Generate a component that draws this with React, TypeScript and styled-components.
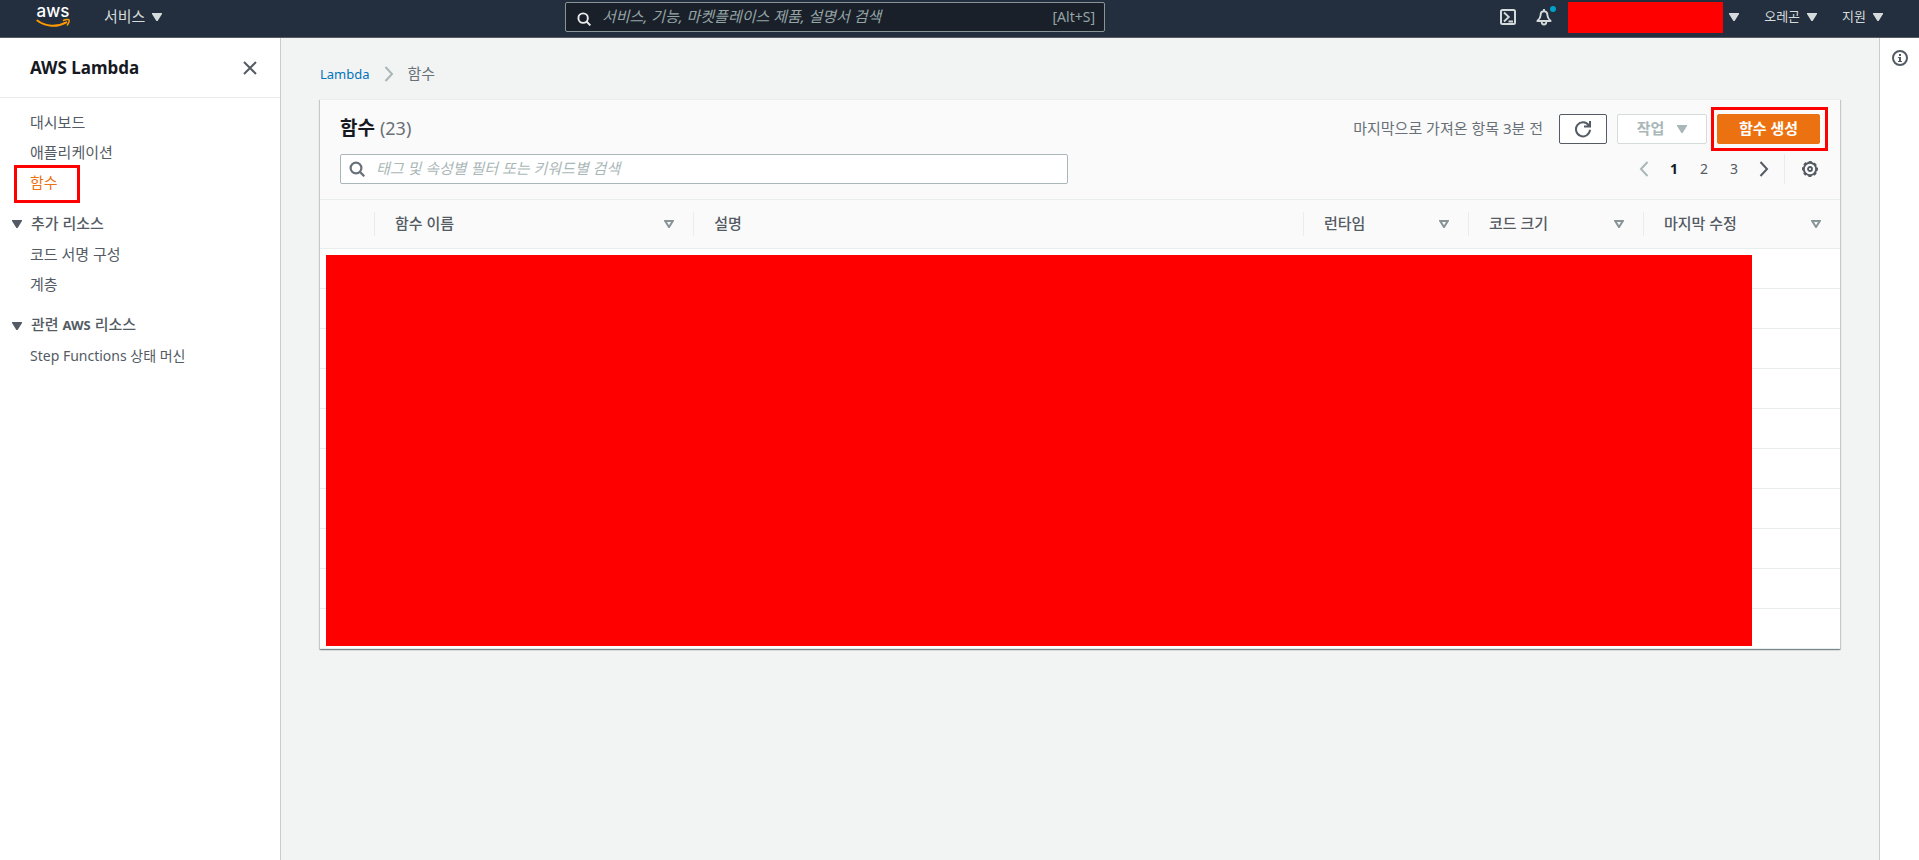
import React from "react";
import styled, { createGlobalStyle } from "styled-components";

const GlobalStyle = createGlobalStyle`
  *, *::before, *::after { box-sizing: border-box; }
  body {
    margin: 0;
    background: #f2f3f3;
    color: #545b64;
    font-family: "Noto Sans", "Noto Sans CJK KR", sans-serif;
    font-size: 15px;
    line-height: 20px;
  }
  button, input { font: inherit; color: inherit; }
  button { padding: 0; border: 0; background: none; cursor: pointer; white-space: nowrap; }
  a { color: inherit; text-decoration: none; }
  svg { display: block; flex: none; }
`;

/* Hangul sits low in its line box; the bottom padding centres it optically. */
const Label = styled.span`
  padding-bottom: 2px;
`;

/* ---------- top bar ---------- */

const TopBar = styled.header`
  display: flex;
  align-items: flex-start;
  height: 38px;
  padding: 2px 36px 0;
  background: #232f3e;
  border-bottom: 1px solid #545b64;
  color: #d5dbdb;
`;

const TopSide = styled.div<{ $end?: boolean }>`
  display: flex;
  flex: ${(p) => (p.$end ? "1" : "0 1 529px")};
  align-items: center;
  justify-content: ${(p) => (p.$end ? "flex-end" : "flex-start")};
  height: 30px;
`;

const TopMenu = styled.button<{ $size: number; $gap: number }>`
  display: flex;
  align-items: center;
  gap: 7px;
  height: 24px;
  margin-left: ${(p) => p.$gap}px;
  font-size: ${(p) => p.$size}px;
`;

const IconButton = styled.button`
  position: relative;
  display: flex;
  margin-right: 20px;
`;

const Dot = styled.span`
  position: absolute;
  top: -3px;
  right: -4px;
  width: 6px;
  height: 6px;
  border-radius: 50%;
  background: #00a1c9;
`;

const AccountMask = styled.span`
  width: 155px;
  height: 31px;
  margin: 1px 6px 0 -4px;
  background: #f00;
`;

const TopSearch = styled.label`
  display: flex;
  align-items: center;
  flex: 0 1 540px;
  height: 30px;
  padding: 0 9px 0 11px;
  background: #1a2029;
  border: 1px solid #879596;
  border-radius: 2px;
  color: #95a5a6;

  svg { margin-top: 4px; color: #eaeded; }
`;

const SearchInput = styled.input<{ $tone: string }>`
  flex: 1;
  min-width: 0;
  height: 26px;
  padding: 0 0 2px;
  border: 0;
  outline: 0;
  background: transparent;
  font-size: 15px;
  margin-left: 11px;
  &::placeholder { color: ${(p) => p.$tone}; font-style: italic; opacity: 1; }
`;

const Shortcut = styled.kbd`
  font-family: inherit;
  font-size: 14px;
`;

/* ---------- page frame ---------- */

const Frame = styled.div`
  display: flex;
  min-height: calc(100vh - 38px);
`;

const Sidebar = styled.aside`
  flex: 0 0 281px;
  background: #fff;
  border-right: 1px solid #c8cccc;
`;

const SideHead = styled.div`
  display: flex;
  align-items: center;
  justify-content: space-between;
  height: 60px;
  padding: 0 23px 0 30px;
  border-bottom: 1px solid #eaeded;
`;

const SideTitle = styled.h2`
  margin: 0;
  color: #16191f;
  font-size: 17px;
  font-weight: 700;
`;

const SideNav = styled.nav`
  padding-top: 9px;
`;

const NavList = styled.ul`
  margin: 0;
  padding: 0 0 11px;
  list-style: none;
`;

const NavItem = styled.li`
  position: relative;
  display: flex;
  align-items: center;
  height: 30px;
  padding-left: 30px;
`;

const NavLink = styled.a<{ $active?: boolean; $mixed?: boolean }>`
  color: ${(p) => (p.$active ? "#ec7211" : "#545b64")};
  font-size: ${(p) => (p.$mixed ? 14 : 15)}px;
`;

const NavMark = styled.span`
  position: absolute;
  top: -2px;
  left: 14px;
  width: 66px;
  height: 38px;
  border: 3px solid #f00;
  pointer-events: none;
`;

const NavGroup = styled.button`
  display: flex;
  align-items: center;
  gap: 9px;
  height: 31px;
  padding-left: 12px;
  font-size: 15px;
  font-weight: 500;

  b { font-size: 13px; }
`;

const Main = styled.main`
  flex: 1;
  min-width: 0;
  padding: 26px 39px 40px;
`;

const InfoRail = styled.aside`
  flex: 0 0 40px;
  display: flex;
  justify-content: center;
  align-items: flex-start;
  padding-top: 12px;
  background: #fff;
  border-left: 1px solid #c8cccc;
`;

const Crumbs = styled.nav`
  display: flex;
  align-items: center;
  height: 20px;
  margin-bottom: 15px;
  color: #687078;
  svg { margin: 0 14px; }
`;

const CrumbLink = styled.a`
  color: #0073bb;
  font-size: 13px;
`;

/* ---------- functions card ---------- */

const Card = styled.section`
  background: #fff;
  border-top: 1px solid #eaeded;
  box-shadow: 0 1px 1px 0 rgba(0, 28, 36, 0.3), 1px 1px 1px 0 rgba(0, 28, 36, 0.15),
    -1px 1px 1px 0 rgba(0, 28, 36, 0.15);
`;

const CardHead = styled.div`
  display: flex;
  flex-direction: column;
  gap: 10px;
  padding: 14px 20px 15px;
  background: #fafafa;
  border-bottom: 1px solid #eaeded;
`;

const HeadRow = styled.div`
  display: flex;
  align-items: center;
  justify-content: space-between;
  height: 30px;
`;

const Title = styled.h1`
  margin: 0;
  padding-bottom: 2px;
  color: #16191f;
  font-size: 19px;
  font-weight: 700;
`;

const Count = styled.span`
  color: #687078;
  font-size: 18px;
  font-weight: 400;
`;

const Actions = styled.div`
  display: flex;
  align-items: center;
  gap: 10px;
`;

const Fetched = styled(Label)`
  margin-right: 6px;
  color: #687078;
`;

const ActionButton = styled.button<{ $kind: "normal" | "disabled" | "primary" }>`
  position: relative;
  display: flex;
  align-items: center;
  justify-content: center;
  gap: 13px;
  height: 30px;
  width: ${(p) => ({ normal: 48, disabled: 90, primary: 103 })[p.$kind]}px;
  border: 1px solid ${(p) => ({ normal: "#545b64", disabled: "#d5dbdb", primary: "#ec7211" })[p.$kind]};
  border-radius: 2px;
  background: ${(p) => (p.$kind === "primary" ? "#ec7211" : "#fff")};
  color: ${(p) => ({ normal: "#545b64", disabled: "#aab7b8", primary: "#fff" })[p.$kind]};
  font-weight: 700;
`;

const ButtonMark = styled.span`
  position: absolute;
  inset: -8px -9px -8px -7px;
  border: 3px solid #f00;
  pointer-events: none;
`;

const FilterBox = styled.label`
  display: flex;
  align-items: center;
  flex: 0 1 728px;
  height: 30px;
  padding: 0 8px;
  background: #fff;
  border: 1px solid #aab7b8;
  border-radius: 2px;
  svg { color: #687078; }
`;

const Pager = styled.div`
  display: flex;
  align-items: center;
`;

const PageButton = styled.button<{ $current?: boolean }>`
  display: flex;
  align-items: center;
  justify-content: center;
  width: 30px;
  height: 30px;
  color: ${(p) => (p.$current ? "#16191f" : "#545b64")};
  font-size: 14px;
  font-weight: ${(p) => (p.$current ? 700 : 400)};
`;

const Settings = styled.button`
  display: flex;
  align-items: center;
  height: 30px;
  margin-left: 5px;
  padding: 0 2px 0 17px;
  border-left: 1px solid #eaeded;
`;

const TableWrap = styled.div`
  position: relative;
`;

const Table = styled.table`
  width: 100%;
  table-layout: fixed;
  border-collapse: separate;
  border-spacing: 0;
`;

const Th = styled.th<{ $width: string }>`
  width: ${(p) => p.$width};
  height: 49px;
  padding: 0;
  background: #fafafa;
  border-bottom: 1px solid #eaeded;
  font-weight: 500;
  text-align: left;
`;

const ThInner = styled.div<{ $last?: boolean }>`
  display: flex;
  align-items: center;
  justify-content: space-between;
  height: 24px;
  padding: 0 19px 0 20px;
  border-right: ${(p) => (p.$last ? "0" : "1px solid #eaeded")};
`;

const Td = styled.td`
  height: 40px;
  padding: 0;
  border-bottom: 1px solid #eaeded;
`;

const TableMask = styled.div`
  position: absolute;
  top: 55px;
  right: 88px;
  bottom: 3px;
  left: 6px;
  background: #f00;
`;

/* ---------- icons ---------- */

const Caret = () => (
  <svg width="10" height="8" viewBox="0 0 10 8" aria-hidden="true">
    <path d="M0 0h10v1L5.6 8H4.4L0 1z" fill="currentColor" />
  </svg>
);

const SortIcon = () => (
  <svg width="10" height="8" viewBox="0 0 10 8" aria-hidden="true">
    <path d="M0 0h10v1L5.6 8H4.4L0 1zM3 2h4L5 5.300z" fill="#879596" fillRule="evenodd" />
  </svg>
);

const SearchIcon = ({ size = 16 }: { size?: number }) => (
  <svg width={size} height={size} viewBox="0 0 16 16" fill="none" stroke="currentColor" strokeWidth="2.200" aria-hidden="true">
    <circle cx="7" cy="7" r="5.400" />
    <path d="M10.900 10.900 15.300 15.300" />
  </svg>
);

const Chevron = ({ left, color }: { left?: boolean; color: string }) => (
  <svg width="10" height="16" viewBox="0 0 10 16" fill="none" stroke={color} strokeWidth="2" aria-hidden="true">
    <path d={left ? "M8.5 1 2 8l6.500 7" : "M1.500 1 8 8l-6.500 7"} />
  </svg>
);

const LogoSvg = styled.svg`
  overflow: visible;
`;

const Logo = () => (
  <LogoSvg width="34" height="30" viewBox="0 0 34 30" role="img" aria-label="AWS">
    <text x="17" y="15" textAnchor="middle" fontFamily="Inter, sans-serif" fontSize="17" fontWeight="500" fill="#fff">
      aws
    </text>
    <path d="M1.300 18.600c8.200 6.400 19.700 6.800 29 1.700" fill="none" stroke="#f90" strokeWidth="1.900" strokeLinecap="round" />
    <path d="M27.500 18.500c2.200-1.200 5-1.300 5.500-.6.500.8-.1 3.300-1.700 5" fill="none" stroke="#f90" strokeWidth="1.500" strokeLinecap="round" />
  </LogoSvg>
);

const ShellIcon = () => (
  <svg width="16" height="16" viewBox="0 0 16 16" fill="none" stroke="currentColor" strokeWidth="2" aria-hidden="true">
    <rect x="1" y="1" width="14" height="14" rx="1.500" />
    <path d="M4 3.500 8.800 8 4 12.500M8.500 12.500H13" strokeWidth="1.800" />
  </svg>
);

const BellIcon = () => (
  <svg width="16" height="17" viewBox="0 0 16 17" fill="none" stroke="currentColor" strokeWidth="2" strokeLinejoin="round" aria-hidden="true">
    <path d="M8 0v2M8 2.300C5.600 2.300 4.600 4 4.600 6.300c0 2.400-1.100 3.800-3.200 5.700h13.200c-2.100-1.900-3.200-3.300-3.200-5.700C11.400 4 10.400 2.300 8 2.300z" strokeWidth="1.900" />
    <path d="M5.600 12.500c0 1.900.9 3 2.400 3s2.400-1.100 2.400-3" strokeWidth="1.800" />
  </svg>
);

const CloseIcon = () => (
  <svg width="14" height="14" viewBox="0 0 14 14" stroke="#545b64" strokeWidth="2" aria-hidden="true">
    <path d="M1 1l12 12M13 1L1 13" />
  </svg>
);

const RefreshIcon = () => (
  <svg width="18" height="18" viewBox="0 0 18 18" fill="none" stroke="currentColor" strokeWidth="2" aria-hidden="true">
    <path d="M14.800 5.400A7 7 0 1 0 16 9.800M16 1v5.500h-6" />
  </svg>
);

const GearIcon = () => (
  <svg width="16" height="16" viewBox="0 0 16 16" fill="none" stroke="#545b64" aria-hidden="true">
    <circle cx="8" cy="8" r="6.200" strokeWidth="2" />
    <circle cx="8" cy="8" r="7.200" strokeWidth="1.600" strokeDasharray="3.200 2.455" strokeDashoffset="1.600" />
    <circle cx="8" cy="8" r="2" strokeWidth="1.800" />
  </svg>
);

const InfoIcon = () => (
  <svg width="16" height="16" viewBox="0 0 16 16" fill="none" stroke="#545b64" strokeWidth="2" aria-hidden="true">
    <circle cx="8" cy="8" r="7" />
    <path d="M7 4h2v2H7zM6 7h3v4h1v1H6v-1h1V8H6z" fill="#545b64" stroke="none" />
  </svg>
);

/* ---------- data ---------- */

const columns = [
  { label: "", width: "55px", sort: false },
  { label: "함수 이름", width: "21%", sort: true },
  { label: "설명", width: "auto", sort: false },
  { label: "런타임", width: "165px", sort: true },
  { label: "코드 크기", width: "175px", sort: true },
  { label: "마지막 수정", width: "196px", sort: true },
];

const rows = Array.from({ length: 10 }, (_, i) => i);

export default function App() {
  return (
    <>
      <GlobalStyle />
      <TopBar>
        <TopSide>
          <a href="#home">
            <Logo />
          </a>
          <TopMenu $size={15} $gap={34}>
            <Label>서비스</Label>
            <Caret />
          </TopMenu>
        </TopSide>
        <TopSearch>
          <SearchIcon size={14} />
          <SearchInput $tone="#95a5a6" aria-label="서비스 검색" placeholder="서비스, 기능, 마켓플레이스 제품, 설명서 검색" />
          <Shortcut>[Alt+S]</Shortcut>
        </TopSearch>
        <TopSide $end>
          <IconButton aria-label="CloudShell">
            <ShellIcon />
          </IconButton>
          <IconButton aria-label="알림">
            <BellIcon />
            <Dot />
          </IconButton>
          <AccountMask />
          <TopMenu $size={13} $gap={0} aria-label="계정">
            <Caret />
          </TopMenu>
          <TopMenu $size={13} $gap={25}>
            <Label>오레곤</Label>
            <Caret />
          </TopMenu>
          <TopMenu $size={13} $gap={25}>
            <Label>지원</Label>
            <Caret />
          </TopMenu>
        </TopSide>
      </TopBar>
      <Frame>
        <Sidebar>
          <SideHead>
            <SideTitle>AWS Lambda</SideTitle>
            <button aria-label="닫기">
              <CloseIcon />
            </button>
          </SideHead>
          <SideNav>
            <NavList>
              <NavItem>
                <NavLink href="#dashboard">대시보드</NavLink>
              </NavItem>
              <NavItem>
                <NavLink href="#applications">애플리케이션</NavLink>
              </NavItem>
              <NavItem>
                <NavLink href="#functions" $active>
                  함수
                </NavLink>
                <NavMark />
              </NavItem>
            </NavList>
            <NavGroup>
              <Caret />
              <Label>추가 리소스</Label>
            </NavGroup>
            <NavList>
              <NavItem>
                <NavLink href="#signing">코드 서명 구성</NavLink>
              </NavItem>
              <NavItem>
                <NavLink href="#layers">계층</NavLink>
              </NavItem>
            </NavList>
            <NavGroup>
              <Caret />
              <Label>
                관련 <b>AWS</b> 리소스
              </Label>
            </NavGroup>
            <NavList>
              <NavItem>
                <NavLink href="#step-functions" $mixed>
                  Step Functions 상태 머신
                </NavLink>
              </NavItem>
            </NavList>
          </SideNav>
        </Sidebar>
        <Main>
          <Crumbs>
            <CrumbLink href="#lambda">Lambda</CrumbLink>
            <Chevron color="#aab7b8" />
            <Label>함수</Label>
          </Crumbs>
          <Card>
            <CardHead>
              <HeadRow>
                <Title>
                  함수 <Count>(23)</Count>
                </Title>
                <Actions>
                  <Fetched>마지막으로 가져온 항목 3분 전</Fetched>
                  <ActionButton $kind="normal" aria-label="새로 고침">
                    <RefreshIcon />
                  </ActionButton>
                  <ActionButton $kind="disabled" disabled>
                    <Label>작업</Label>
                    <Caret />
                  </ActionButton>
                  <ActionButton $kind="primary">
                    <Label>함수 생성</Label>
                    <ButtonMark />
                  </ActionButton>
                </Actions>
              </HeadRow>
              <HeadRow>
                <FilterBox>
                  <SearchIcon />
                  <SearchInput $tone="#aab7b8" aria-label="함수 검색" placeholder="태그 및 속성별 필터 또는 키워드별 검색" />
                </FilterBox>
                <Pager>
                  <PageButton aria-label="이전">
                    <Chevron left color="#aab7b8" />
                  </PageButton>
                  <PageButton $current>1</PageButton>
                  <PageButton>2</PageButton>
                  <PageButton>3</PageButton>
                  <PageButton aria-label="다음">
                    <Chevron color="#545b64" />
                  </PageButton>
                  <Settings aria-label="설정">
                    <GearIcon />
                  </Settings>
                </Pager>
              </HeadRow>
            </CardHead>
            <TableWrap>
              <Table>
                <thead>
                  <tr>
                    {columns.map((c, i) => (
                      <Th key={i} $width={c.width} scope="col">
                        <ThInner $last={i === columns.length - 1}>
                          <Label>{c.label}</Label>
                          {c.sort && (
                            <button aria-label={`${c.label} 정렬`}>
                              <SortIcon />
                            </button>
                          )}
                        </ThInner>
                      </Th>
                    ))}
                  </tr>
                </thead>
                <tbody>
                  {rows.map((r) => (
                    <tr key={r}>
                      {columns.map((_, i) => (
                        <Td key={i} />
                      ))}
                    </tr>
                  ))}
                </tbody>
              </Table>
              <TableMask />
            </TableWrap>
          </Card>
        </Main>
        <InfoRail>
          <button aria-label="정보">
            <InfoIcon />
          </button>
        </InfoRail>
      </Frame>
    </>
  );
}
